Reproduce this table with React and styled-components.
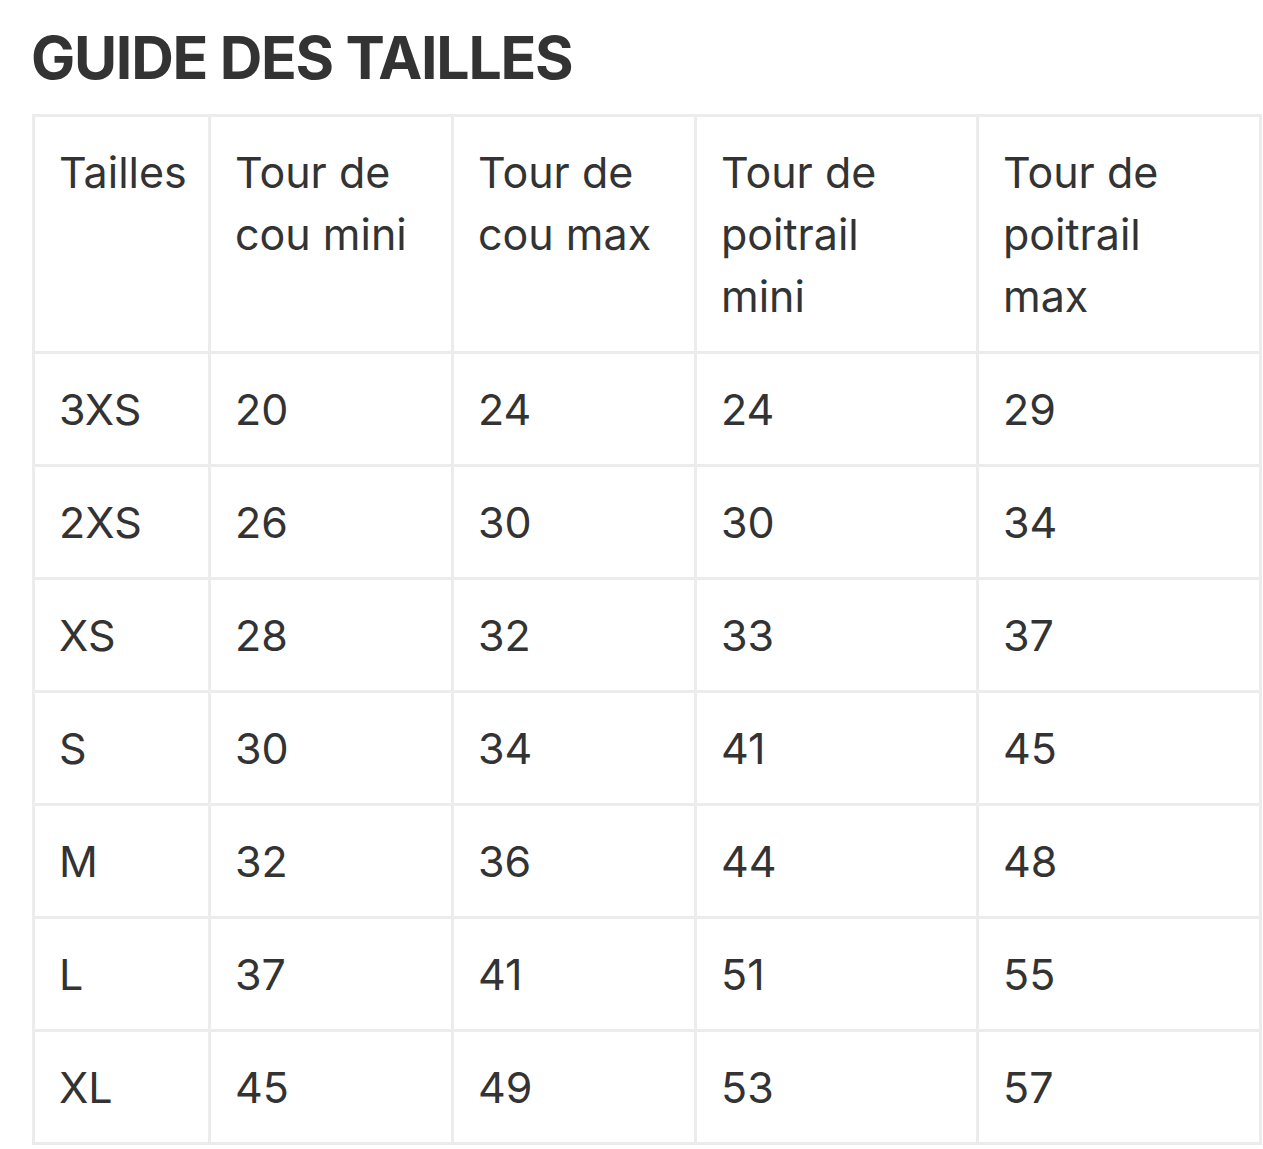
import React from 'react';
import styled, { createGlobalStyle } from 'styled-components';

const GlobalStyle = createGlobalStyle`
  body {
    margin: 0;
    background: #fff;
  }
`;

const Page = styled.div`
  padding: 22px 0 0 32px;
  font-family: Inter, "Liberation Sans", sans-serif;
  color: #333;
`;

const Title = styled.h1`
  margin: 0 0 20px -1px;
  font-family: Inter, "Liberation Sans", sans-serif;
  font-weight: 700;
  font-size: 59px;
  line-height: 72px;
  letter-spacing: -1.3px;
  color: #333;
`;

const Table = styled.table`
  border-collapse: collapse;
  table-layout: fixed;
  width: 1230px;
`;

const Cell = styled.td`
  border: 3px solid #ececec;
  padding: 24px 24px;
  font-size: 43px;
  line-height: 62px;
  font-weight: 400;
  vertical-align: top;
  text-align: left;
  color: #333;
`;

const HeadCell = styled(Cell).attrs({ as: 'th' })`
  font-weight: 400;
`;

const Line = styled.span`
  display: block;
  white-space: nowrap;
`;

const widths = [176, 243, 243, 282, 283];

const headers = [
  ['Tailles'],
  ['Tour de', 'cou mini'],
  ['Tour de', 'cou max'],
  ['Tour de', 'poitrail', 'mini'],
  ['Tour de', 'poitrail', 'max'],
];

const rows = [
  ['3XS', '20', '24', '24', '29'],
  ['2XS', '26', '30', '30', '34'],
  ['XS', '28', '32', '33', '37'],
  ['S', '30', '34', '41', '45'],
  ['M', '32', '36', '44', '48'],
  ['L', '37', '41', '51', '55'],
  ['XL', '45', '49', '53', '57'],
];

export default function App() {
  return (
    <>
      <GlobalStyle />
      <Page>
        <Title>GUIDE DES TAILLES</Title>
        <Table>
          <colgroup>
            {widths.map((w, i) => (
              <col key={i} style={{ width: w }} />
            ))}
          </colgroup>
          <thead>
            <tr>
              {headers.map((h, i) => (
                <HeadCell key={i}>
                  {h.map((l) => (
                    <Line key={l}>{l}</Line>
                  ))}
                </HeadCell>
              ))}
            </tr>
          </thead>
          <tbody>
            {rows.map((r) => (
              <tr key={r[0]}>
                {r.map((v, i) => (
                  <Cell key={i}>{v}</Cell>
                ))}
              </tr>
            ))}
          </tbody>
        </Table>
      </Page>
    </>
  );
}
